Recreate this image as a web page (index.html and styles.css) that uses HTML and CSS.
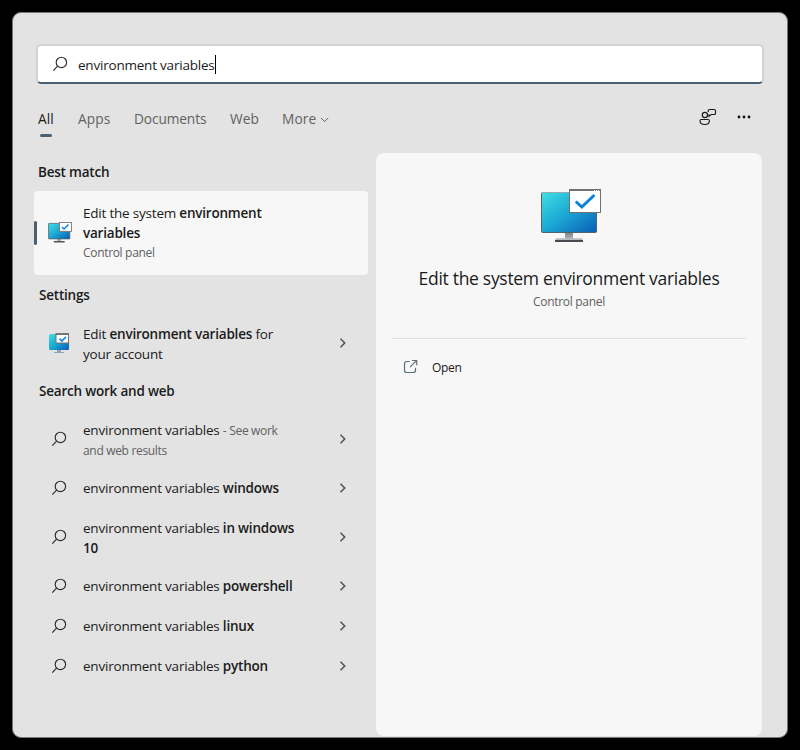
FILE: index.html
```html
<!DOCTYPE html>
<html lang="en">
<head>
<meta charset="utf-8">
<title>Search</title>
<link rel="stylesheet" href="styles.css">
</head>
<body>
<svg class="defs" aria-hidden="true">
  <defs>
    <linearGradient id="screen" x1="0" y1="0" x2="1" y2="1">
      <stop offset="0" stop-color="#3fe0e4"/><stop offset=".5" stop-color="#1ba6d3"/><stop offset="1" stop-color="#0c5db5"/>
    </linearGradient>
    <linearGradient id="neck" x1="0" y1="0" x2="0" y2="1">
      <stop offset="0" stop-color="#80868b"/><stop offset="1" stop-color="#b7bdc2"/>
    </linearGradient>
    <symbol id="search" viewBox="0 0 16 16"><circle cx="9.4" cy="6.4" r="5.2"/><path d="M5.6 10.1L1.3 14.6"/></symbol>
    <symbol id="chevron" viewBox="0 0 8 12"><path d="M1.5 1.8L5.7 6L1.5 10.2"/></symbol>
  </defs>
</svg>
<main class="window">
  <div class="search-box">
    <svg class="glass"><use href="#search"/></svg>
    <span class="query">environment variables</span><span class="caret"></span>
  </div>
  <nav class="tabs">
    <span class="tab tab-all">All</span>
    <span class="tab tab-apps">Apps</span>
    <span class="tab tab-docs">Documents</span>
    <span class="tab tab-web">Web</span>
    <span class="tab tab-more">More</span>
    <svg class="more-arrow" viewBox="0 0 10 6"><path d="M1 1L4.6 4.6L8.2 1"/></svg>
    <svg class="feedback" viewBox="0 0 18 18">
      <circle cx="5.9" cy="7" r="2.6"/>
      <path d="M2.3 11.5H9.2Q10.4 11.5 10.4 12.7C10.4 15.2 8.5 16.5 5.8 16.5S1 15.2 1 12.7Q1 11.5 2.3 11.5Z"/>
      <path d="M9.2 4V2.8Q9.2 1.5 10.5 1.5H15.2Q16.5 1.5 16.5 2.8V5.2Q16.5 6.5 15.2 6.5H12.3L9.9 8.4V6.3"/>
    </svg>
    <svg class="dots" viewBox="0 0 14 4"><circle cx="2" cy="2" r="1.4"/><circle cx="7" cy="2" r="1.4"/><circle cx="12" cy="2" r="1.4"/></svg>
  </nav>
  <div class="content">
    <section class="results">
      <h2 class="heading">Best match</h2>
      <div class="best">
        <svg class="best-icon" viewBox="0 0 62 54">
          <rect x="1.5" y="3.5" width="55" height="40" rx="1" fill="url(#screen)" stroke="#53636b" stroke-width="2"/>
          <path d="M24 44h9v6h-9z" fill="url(#neck)"/><path d="M15 49h28v4H15z" fill="#4e5358"/>
          <rect x="29.5" y="1" width="31" height="23" fill="#fff" stroke="#777" stroke-width="2.4"/>
          <path d="M36 13l5.5 5L53 6.5" fill="none" stroke="#1484dc" stroke-width="4"/>
        </svg>
        <div class="text"><div>Edit the system <b>environment</b></div><div><b>variables</b></div><div class="sub">Control panel</div></div>
      </div>
      <h2 class="heading settings-heading">Settings</h2>
      <div class="row double settings-row">
        <svg class="settings-icon" viewBox="0 0 22 22">
          <rect x="1" y="2" width="20" height="16" rx="1.5" fill="url(#screen)"/>
          <path d="M9 18h4v2h3v1H6v-1h3z" fill="#8da4b5"/>
          <path d="M8 1.8h12.5v9.2H8z" fill="#fff" stroke="#74716d"/><path d="M7.5 2.1h13.5" stroke="#74716d" stroke-width="1.8"/>
          <path d="M11.5 6.7l2.4 2.2L18 4.9" fill="none" stroke="#258fe6" stroke-width="1.9"/>
        </svg>
        <div class="text"><div>Edit <b>environment variables</b> for</div><div>your account</div></div>
        <svg class="chevron"><use href="#chevron"/></svg>
      </div>
      <h2 class="heading web-heading">Search work and web</h2>
      <div class="row double"><svg class="glass"><use href="#search"/></svg><div class="text"><div>environment variables <span class="sub">- See work</span></div><div class="sub">and web results</div></div><svg class="chevron"><use href="#chevron"/></svg></div>
      <div class="row"><svg class="glass"><use href="#search"/></svg><div class="text">environment variables <b>windows</b></div><svg class="chevron"><use href="#chevron"/></svg></div>
      <div class="row double"><svg class="glass"><use href="#search"/></svg><div class="text"><div>environment variables <b>in windows</b></div><div><b>10</b></div></div><svg class="chevron"><use href="#chevron"/></svg></div>
      <div class="row"><svg class="glass"><use href="#search"/></svg><div class="text">environment variables <b>powershell</b></div><svg class="chevron"><use href="#chevron"/></svg></div>
      <div class="row"><svg class="glass"><use href="#search"/></svg><div class="text">environment variables <b>linux</b></div><svg class="chevron"><use href="#chevron"/></svg></div>
      <div class="row"><svg class="glass"><use href="#search"/></svg><div class="text">environment variables <b>python</b></div><svg class="chevron"><use href="#chevron"/></svg></div>
    </section>
    <section class="detail">
      <svg class="detail-icon" viewBox="0 0 62 54">
        <rect x="1.5" y="3.5" width="55" height="40" rx="1" fill="url(#screen)" stroke="#53636b"/>
        <path d="M2 3.5h28" stroke="#97aaae"/>
        <path d="M25 44h8v7h-8z" fill="url(#neck)"/><path d="M16 49.2h26l1 2H15z" fill="#b6bbc0"/><path d="M15 51h28v2H15z" fill="#484c50"/>
        <rect x="29.5" y=".5" width="31" height="23" fill="#fff" stroke="#75716d"/>
        <path d="M29 1h32" stroke="#75716d" stroke-width="2"/><path d="M54 1.5h1m1 0h1m1 0h1" stroke="#fff"/>
        <path d="M35.8 12.5l6 5.5L54.4 6" fill="none" stroke="#0d82da" stroke-width="3"/>
      </svg>
      <h1 class="title">Edit the system environment variables</h1>
      <div class="detail-sub">Control panel</div>
      <div class="rule"></div>
      <div class="open"><svg class="open-icon" viewBox="0 0 16 16"><path d="M6.8 2.5H3.8Q1.5 2.5 1.5 4.8V11.2Q1.5 13.5 3.8 13.5H10.2Q12.5 13.5 12.5 11.2V8.8M9 1.5H13.7V6.2M13.5 1.7L7 8.2"/></svg><span>Open</span></div>
    </section>
  </div>
</main>
</body>
</html>
```
FILE: styles.css
```css
* { box-sizing: border-box; }
body { margin: 0; background: #000; font-family: "Open Sans", sans-serif; font-size: 13.5px; color: #1b1b1b; letter-spacing: -0.21px; }
svg { display: block; flex: none; }
.defs { width: 0; height: 0; position: absolute; }
.window { width: 776px; height: 726px; margin: 12px; background: #e3e3e3; border: 1px solid #777; border-radius: 9px; padding: 31px 24px 0 21px; overflow: hidden; }
.search-box { margin-left: 2px; width: 728px; height: 40px; border: 2px solid #d3d3d3; border-bottom-color: #4b6070; border-radius: 5px; background: #fff; display: flex; align-items: center; padding-left: 14px; }
.glass { width: 16px; height: 16px; fill: none; stroke: #2c2c2c; stroke-width: 1.15; }
.query { margin-left: 10px; padding-top: 2px; line-height: 20px; }
.caret { width: 1px; height: 19px; background: #000; }
.tabs { height: 69px; display: flex; align-items: flex-start; padding: 25px 18px 0 4px; color: #616161; font-size: 13.7px; letter-spacing: 0.1px; }
.tab { line-height: 20px; white-space: nowrap; }
.tab-all { width: 40px; color: #1b1b1b; }
.tab-all::after { content: ""; display: block; width: 12px; height: 3px; border-radius: 2px; background: #4b6070; margin: 5px 0 0 2px; }
.tab-apps { width: 56px; }
.tab-docs { width: 96px; letter-spacing: -0.1px; }
.tab-web { width: 52px; }
.tab-more { width: 38px; }
.more-arrow { width: 10px; height: 6px; margin-top: 8px; fill: none; stroke: #666; }
.feedback { width: 18px; height: 18px; margin: -1px 0 0 auto; fill: none; stroke: #1b1b1b; stroke-width: 1.15; }
.dots { width: 14px; height: 4px; margin: 6px -6px 0 20px; fill: #111; }
.content { display: flex; gap: 8px; }
.results { width: 334px; }
.heading { margin: 9px 0 9px 4px; font-size: 13.5px; line-height: 20px; font-weight: 600; }
.best { height: 84px; background: #f7f7f7; border-radius: 4px; display: flex; align-items: center; }
.best::before { content: ""; width: 3px; height: 24px; border-radius: 2px; background: #4b6070; }
.best-icon { width: 24px; height: 21px; margin: 0 0 1px 11px; }
.text { line-height: 20px; white-space: nowrap; }
.best .text { margin-left: 11px; }
.sub { font-size: 12px; color: #616161; letter-spacing: -0.32px; }
b { font-weight: 600; }
.settings-heading { margin: 10px 0 9px 5px; }
.web-heading { margin: 9px 0 9px 5px; }
.row { height: 40px; display: flex; align-items: center; padding-left: 17px; }
.row .text { margin-left: 16px; }
.double { height: 58px; }
.double .text { padding-top: 2px; }
.settings-row { padding-left: 14px; }
.settings-icon { width: 22px; height: 22px; }
.settings-row .text { margin-left: 13px; }
.chevron { width: 8px; height: 12px; margin-left: auto; margin-right: 21px; fill: none; stroke: #555; stroke-width: 1.6; }
.detail { width: 386px; height: 583px; background: #f7f7f7; border-radius: 8px; padding-top: 36px; }
.detail-icon { width: 62px; height: 54px; margin-left: 164px; }
.title { margin: 22px 0 0; text-align: center; font-size: 17.5px; letter-spacing: -0.3px; line-height: 26px; font-weight: 400; white-space: nowrap; }
.detail-sub { margin-top: 1px; text-align: center; font-size: 12px; line-height: 20px; color: #616161; letter-spacing: -0.3px; }
.rule { height: 1px; margin: 26px 16px 0; background: #dfdfdf; }
.open { display: flex; align-items: center; height: 20px; margin: 18px 0 0 27px; font-size: 12px; letter-spacing: -0.3px; }
.open-icon { width: 16px; height: 16px; margin-right: 13px; fill: none; stroke: #5d6e7b; stroke-width: 1.2; }
```
